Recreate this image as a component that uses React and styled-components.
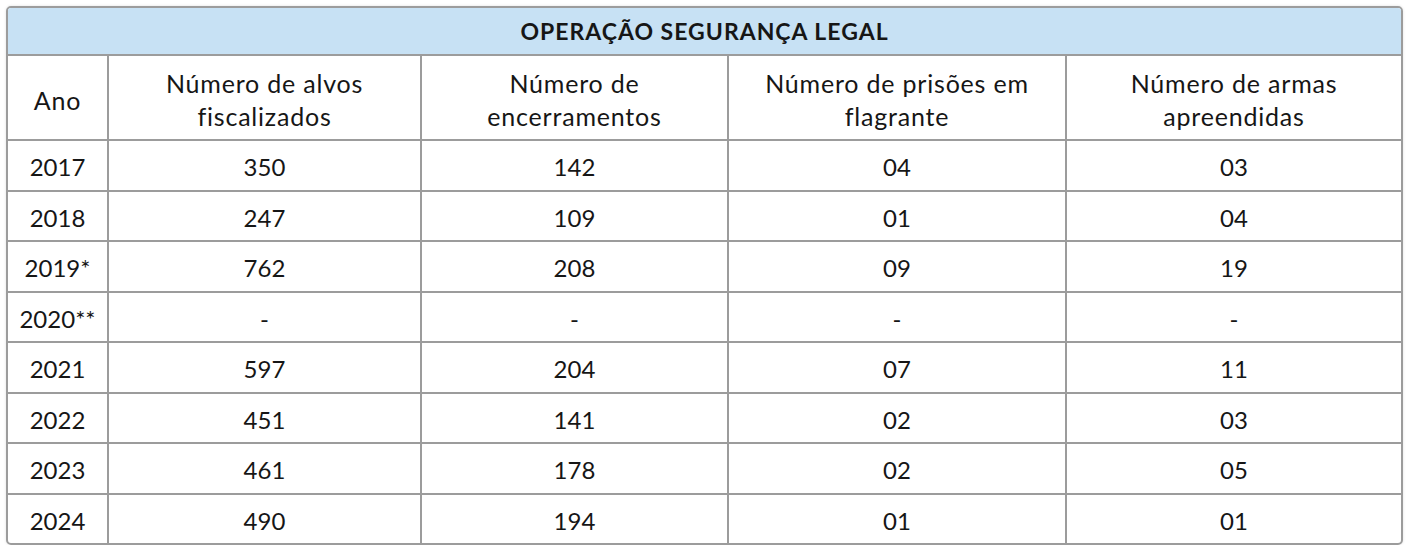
import React from 'react';
import styled, { createGlobalStyle } from 'styled-components';

const GlobalStyle = createGlobalStyle`
  body {
    margin: 0;
    background: #fff;
    font-family: Lato, "Open Sans", sans-serif;
  }
`;

const Frame = styled.div`
  box-sizing: border-box;
  width: 1397px;
  margin: 6px 0 0 6px;
  border: 2px solid #9c9c9c;
  border-radius: 5px;
  overflow: hidden;
  box-shadow: 0 0 3px rgba(0, 0, 0, 0.12);
`;

const Table = styled.table`
  width: 100%;
  border-collapse: collapse;
  table-layout: fixed;
  color: #161616;
  font-size: 24px;
  line-height: 29px;
`;

const Title = styled.th`
  height: 46px;
  padding: 0;
  background: #c7e1f4;
  font-weight: 700;
  font-size: 23px;
  letter-spacing: 1px;
  text-align: center;
  border-bottom: 2px solid #9c9c9c;
`;

const Head = styled.th`
  height: 78px;
  padding: 5px 4px 0;
  font-weight: 400;
  font-size: 25px;
  line-height: 33px;
  letter-spacing: 0.8px;
  text-align: center;
  border-bottom: 2px solid #9c9c9c;
  & + & {
    border-left: 2px solid #9c9c9c;
  }
`;

const Line = styled.div`
  white-space: nowrap;
`;

const Row = styled.tr`
  & + & > td {
    border-top: 2px solid #9c9c9c;
  }
`;

const Cell = styled.td`
  height: 45.5px;
  padding: 3px 0 0;
  text-align: center;
  & + & {
    border-left: 2px solid #9c9c9c;
  }
`;

const widths = [100, 313, 307, 338, 335];

const headerLines = [
  ['Ano'],
  ['Número de alvos', 'fiscalizados'],
  ['Número de', 'encerramentos'],
  ['Número de prisões em', 'flagrante'],
  ['Número de armas', 'apreendidas'],
];

const rows = [
  ['2017', '350', '142', '04', '03'],
  ['2018', '247', '109', '01', '04'],
  ['2019*', '762', '208', '09', '19'],
  ['2020**', '-', '-', '-', '-'],
  ['2021', '597', '204', '07', '11'],
  ['2022', '451', '141', '02', '03'],
  ['2023', '461', '178', '02', '05'],
  ['2024', '490', '194', '01', '01'],
];

const App = () => (
  <>
    <GlobalStyle />
    <Frame>
      <Table>
        <colgroup>
          {widths.map((w, i) => (
            <col key={i} style={{ width: w }} />
          ))}
        </colgroup>
        <thead>
          <tr>
            <Title colSpan={5}>OPERAÇÃO SEGURANÇA LEGAL</Title>
          </tr>
          <tr>
            {headerLines.map((lines, i) => (
              <Head key={i}>
                {lines.map((l, j) => (
                  <Line key={j}>{l}</Line>
                ))}
              </Head>
            ))}
          </tr>
        </thead>
        <tbody>
          {rows.map(row => (
            <Row key={row[0]}>
              {row.map((v, i) => (
                <Cell key={i}>{v}</Cell>
              ))}
            </Row>
          ))}
        </tbody>
      </Table>
    </Frame>
  </>
);

export default App;
